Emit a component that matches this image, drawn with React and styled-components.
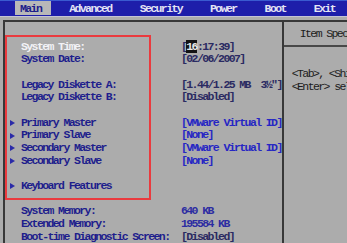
import styled, { createGlobalStyle } from 'styled-components';

const GlobalStyle = createGlobalStyle`
  body {
    margin: 0;
    background: #acacac;
    overflow: hidden;
  }
`;

const tabs = ['Main', 'Advanced', 'Security', 'Power', 'Boot', 'Exit'];

const rows = [
  { label: 'System Time:', time: true, selected: true },
  { label: 'System Date:', value: '[02/06/2007]', tone: 'dark' },
  null,
  { label: 'Legacy Diskette A:', value: '[1.44/1.25 MB  3½"]', tone: 'dark' },
  { label: 'Legacy Diskette B:', value: '[Disabled]', tone: 'dark' },
  null,
  { label: 'Primary Master', value: '[VMware Virtual ID]', tone: 'bright', arrow: true },
  { label: 'Primary Slave', value: '[None]', tone: 'bright', arrow: true },
  { label: 'Secondary Master', value: '[VMware Virtual ID]', tone: 'bright', arrow: true },
  { label: 'Secondary Slave', value: '[None]', tone: 'bright', arrow: true },
  null,
  { label: 'Keyboard Features', arrow: true },
  null,
  { label: 'System Memory:', value: '640 KB', tone: 'mid' },
  { label: 'Extended Memory:', value: '195584 KB', tone: 'mid' },
  { label: 'Boot-time Diagnostic Screen:', value: '[Disabled]', tone: 'dark' },
];

const tones = {
  dark: '#2a2a62',
  bright: '#2626c4',
  mid: '#2c2ca2',
};

function App() {
  return (
    <Screen>
      <GlobalStyle />
      <MenuBar>
        {tabs.map((t, i) => (
          <Tab key={t} $active={i === 0}>{t}</Tab>
        ))}
      </MenuBar>
      <Body>
        <LeftPanel>
          {rows.map((r, i) =>
            r ? (
              <Row key={i}>
                <ArrowCell>{r.arrow && <Arrow />}</ArrowCell>
                <Label $selected={r.selected}>{r.label}</Label>
                {r.time ? (
                  <Value $tone="dark">[<Cursor>16</Cursor>:17:39]</Value>
                ) : (
                  <Value $tone={r.tone}>{r.value}</Value>
                )}
              </Row>
            ) : (
              <Blank key={i} />
            )
          )}
          <Highlight />
        </LeftPanel>
        <HelpPanel>
          <HelpTitle>Item Specific Help</HelpTitle>
          <HelpText>
            <div>&lt;Tab&gt;, &lt;Shift-Tab&gt;, or</div>
            <div>&lt;Enter&gt; selects field.</div>
          </HelpText>
        </HelpPanel>
      </Body>
    </Screen>
  );
}

const Screen = styled.div`
  width: 347px;
  height: 243px;
  overflow: hidden;
  background: #acacac;
  font-family: "Liberation Mono", "DejaVu Sans Mono", monospace;
  font-weight: bold;
  font-size: 11.5px;
  letter-spacing: -1.6px;
  white-space: pre;
`;

const MenuBar = styled.div`
  display: flex;
  gap: 13px;
  padding-left: 15px;
  background: #1e1eaa;
  border-top: 1px solid #3a5ad0;
  border-bottom: 1px solid #c4c4d4;
  box-sizing: border-box;
  height: 17px;
`;

const Tab = styled.div`
  display: flex;
  align-items: center;
  height: 14px;
  padding: 0 10px 0 5px;
  color: ${p => (p.$active ? '#1c1c8a' : '#e4e4f4')};
  background: ${p => (p.$active ? '#b8b8b8' : 'transparent')};
`;

const Body = styled.div`
  display: flex;
  margin: 3px 0 0 3px;
  height: 223px;
  border-top: 2px solid #383838;
  border-left: 2px solid #383838;
`;

const LeftPanel = styled.div`
  position: relative;
  width: 281px;
  padding-top: 18.5px;
  box-sizing: border-box;
`;

const Row = styled.div`
  display: grid;
  grid-template-columns: 16px 160px auto;
  align-items: center;
  height: 12.7px;
  line-height: 12.7px;
`;

const Blank = styled.div`
  height: 12.7px;
`;

const ArrowCell = styled.span`
  display: flex;
  align-items: center;
  padding-left: 5px;
`;

const Arrow = styled.span`
  width: 0;
  height: 0;
  border-top: 3px solid transparent;
  border-bottom: 3px solid transparent;
  border-left: 5px solid #2a2aa8;
`;

const Label = styled.span`
  color: ${p => (p.$selected ? '#f2f2f6' : '#1e1e8c')};
`;

const Value = styled.span`
  color: ${p => tones[p.$tone] || '#2a2a62'};
`;

const Cursor = styled.span`
  background: #141414;
  color: #e8e8e8;
`;

const Highlight = styled.div`
  position: absolute;
  left: 0;
  top: 13px;
  width: 146px;
  height: 165px;
  border: 2px solid #ea3a3e;
  box-sizing: border-box;
  pointer-events: none;
`;

const HelpPanel = styled.div`
  flex: 1;
  border-left: 2px solid #383838;
`;

const HelpTitle = styled.div`
  height: 23px;
  padding-left: 16px;
  line-height: 23px;
  border-bottom: 2px solid #484848;
  color: #1c1c1c;
  font-weight: normal;
`;

const HelpText = styled.div`
  padding: 20px 0 0 8px;
  line-height: 13px;
  color: #1c1c1c;
  font-weight: normal;
`;

export default App;
